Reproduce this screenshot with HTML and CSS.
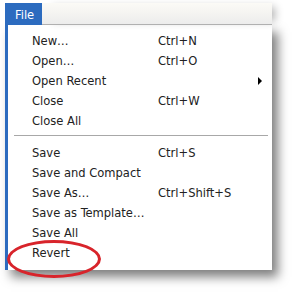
FILE: index.html
```html
<!DOCTYPE html>
<html>
<head>
<meta charset="utf-8">
<link rel="stylesheet" href="styles.css">
</head>
<body>
<div class="wrap">
  <div class="menubar">
    <div class="tab">File</div>
    <div class="barfill"></div>
  </div>
  <div class="menu">
    <div class="item"><span class="label">New…</span><span class="key">Ctrl+N</span></div>
    <div class="item"><span class="label">Open…</span><span class="key">Ctrl+O</span></div>
    <div class="item"><span class="label">Open Recent</span><span class="key"></span><span class="arrow"></span></div>
    <div class="item"><span class="label">Close</span><span class="key">Ctrl+W</span></div>
    <div class="item"><span class="label">Close All</span><span class="key"></span></div>
    <div class="sep"></div>
    <div class="item"><span class="label">Save</span><span class="key">Ctrl+S</span></div>
    <div class="item"><span class="label">Save and Compact</span><span class="key"></span></div>
    <div class="item"><span class="label">Save As…</span><span class="key">Ctrl+Shift+S</span></div>
    <div class="item"><span class="label">Save as Template…</span><span class="key"></span></div>
    <div class="item"><span class="label">Save All</span><span class="key"></span></div>
    <div class="item"><span class="label">Revert</span><span class="key"></span></div>
  </div>
  <div class="ring"></div>
</div>
</body>
</html>
```
FILE: styles.css
```css
html, body {
  margin: 0;
  padding: 0;
  background: #ffffff;
}
.wrap {
  position: relative;
  width: 292px;
  height: 295px;
  padding-top: 3px;
  box-sizing: border-box;
  font-family: "DejaVu Sans Condensed", "DejaVu Sans", sans-serif;
  font-size: 12.8px;
  color: #222222;
}
.menubar {
  display: flex;
  height: 22px;
  margin-left: 5px;
  width: 267px;
}
.tab {
  width: 37px;
  background: #2c6bbf;
  color: #ffffff;
  display: flex;
  align-items: center;
  padding-left: 10px;
  box-sizing: border-box;
}
.barfill {
  flex: 1;
  background: linear-gradient(#fbfaf6 0%, #f6f5f2 40%, #ececec 100%);
  border-bottom: 1px solid #b0b0b0;
  box-shadow: 7px 0 8px -4px rgba(0,0,0,0.3);
}
.menu {
  margin-left: 5px;
  width: 267px;
  box-sizing: border-box;
  border-left: 3px solid #2c6bbf;
  background: #ffffff;
  padding: 5px 0 7px 0;
  box-shadow: 6px 7px 10px rgba(0,0,0,0.5);
}
.item {
  display: flex;
  align-items: center;
  height: 20.2px;
  padding-left: 24px;
  position: relative;
}
.label {
  width: 126px;
}
.key {
  flex: 1;
}
.arrow {
  position: absolute;
  left: 250px;
  top: 7px;
  width: 0;
  height: 0;
  border-top: 4px solid transparent;
  border-bottom: 4px solid transparent;
  border-left: 4px solid #000;
}
.sep {
  height: 1px;
  background: #a8a8a8;
  border-bottom: 1px solid #ffffff;
  margin: 4px 4px 5px 6px;
}
.ring {
  position: absolute;
  left: 7px;
  top: 240px;
  width: 94px;
  height: 38px;
  box-sizing: border-box;
  border: 3px solid #d8242b;
  border-radius: 50%;
}
```
